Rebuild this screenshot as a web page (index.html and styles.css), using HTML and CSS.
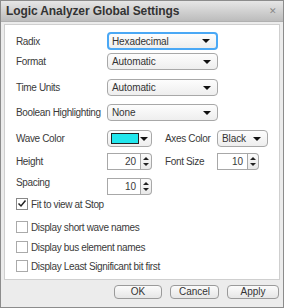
FILE: index.html
```html
<!DOCTYPE html>
<html lang="en">
<head>
    <meta charset="UTF-8">
    <title>Logic Analyzer Global Settings</title>
    <link rel="stylesheet" href="styles.css">
</head>
<body>
    <div class="dialog">
        <div class="titlebar">
            <span class="title">Logic Analyzer Global Settings</span>
            <span class="close">&#x2715;</span>
        </div>

        <div class="panel">
            <div class="row r-radix">
                <span class="label">Radix</span>
                <div class="select wide focus"><span>Hexadecimal</span><i class="arrow"></i></div>
            </div>
            <div class="row r-format">
                <span class="label">Format</span>
                <div class="select wide"><span>Automatic</span><i class="arrow"></i></div>
            </div>
            <div class="row r-units">
                <span class="label">Time Units</span>
                <div class="select wide"><span>Automatic</span><i class="arrow"></i></div>
            </div>
            <div class="row r-bool">
                <span class="label">Boolean Highlighting</span>
                <div class="select wide"><span>None</span><i class="arrow"></i></div>
            </div>
            <div class="row r-wave">
                <span class="label">Wave Color</span>
                <div class="select color"><span class="swatch"></span><i class="arrow"></i></div>
                <span class="label2">Axes Color</span>
                <div class="select axes"><span>Black</span><i class="arrow"></i></div>
            </div>
            <div class="row r-height">
                <span class="label">Height</span>
                <div class="spinner"><span class="value">20</span><span class="steps"><i class="up"></i><i class="down"></i></span></div>
                <span class="label2">Font Size</span>
                <div class="spinner small"><span class="value">10</span><span class="steps"><i class="up"></i><i class="down"></i></span></div>
            </div>
            <div class="row r-spacing">
                <span class="label">Spacing</span>
                <div class="spinner"><span class="value">10</span><span class="steps"><i class="up"></i><i class="down"></i></span></div>
            </div>

            <label class="check c-fit"><span class="box checked">
                <svg width="10" height="10" viewBox="0 0 10 10"><path d="M1.5 4.5 L4 7 L8.5 1.5" fill="none" stroke="#222" stroke-width="1.5"/></svg>
            </span>Fit to view at Stop</label>
            <label class="check c-short"><span class="box"></span>Display short wave names</label>
            <label class="check c-bus"><span class="box"></span>Display bus element names</label>
            <label class="check c-lsb"><span class="box"></span>Display Least Significant bit first</label>
        </div>

        <div class="buttons">
            <button class="btn ok">OK</button>
            <button class="btn cancel">Cancel</button>
            <button class="btn apply">Apply</button>
        </div>
    </div>
</body>
</html>
```

FILE: styles.css
```css
body {
    margin: 0;
    font-family: "Liberation Sans", Arial, sans-serif;
    font-size: 10px;
    color: #3a3a3a;
    background: #fff;
}
.dialog {
    width: 284px;
    height: 308px;
    box-sizing: border-box;
    border: 1px solid #8c8c8c;
    background: #ececec;
    display: flex;
    flex-direction: column;
}
.titlebar {
    height: 20px;
    display: flex;
    align-items: center;
    justify-content: space-between;
    padding: 0 6px 0 5px;
    background: linear-gradient(#e6e6e6, #bcbcbc);
    border-bottom: 1px solid #b0b0b0;
}
.title {
    font-weight: bold;
    font-size: 12px;
    letter-spacing: -0.1px;
    color: #333;
}
.close {
    font-size: 9px;
    color: #888;
}
.panel {
    margin: 2px 3px 0 3px;
    height: 256px;
    box-sizing: border-box;
    border: 1px solid #cfcfcf;
    background: #fff;
    padding: 0 0 0 11px;
    display: flex;
    flex-direction: column;
    letter-spacing: -0.35px;
}
.row {
    display: flex;
    align-items: center;
    height: 17px;
    white-space: nowrap;
}
.label {
    width: 91px;
    flex: none;
}
.label2 {
    width: 52px;
    margin-left: 13px;
    flex: none;
}
.r-radix { margin-top: 7px; height: 18px; }
.r-format { margin-top: 3px; }
.r-units { margin-top: 9px; }
.r-bool { margin-top: 8px; }
.r-wave { margin-top: 9px; }
.r-height { margin-top: 6px; }
.r-spacing { margin-top: 7px; }

.select {
    box-sizing: border-box;
    height: 17px;
    border: 1px solid #a8a8a8;
    border-radius: 4px;
    background: linear-gradient(#fdfdfd, #eeeeee);
    display: flex;
    align-items: center;
    justify-content: space-between;
    padding: 0 6px 0 4px;
    color: #333;
    letter-spacing: -0.1px;
}
.select.wide { width: 111px; }
.select.focus {
    height: 18px;
    border: 2px solid #4aa8f5;
    padding-left: 3px;
}
.select.color { width: 45px; padding-left: 3px; padding-right: 3px; }
.select.axes { width: 51px; }
.arrow {
    width: 0;
    height: 0;
    border-left: 4px solid transparent;
    border-right: 4px solid transparent;
    border-top: 4px solid #111;
}
.swatch {
    width: 26px;
    height: 9px;
    border: 1px solid #222;
    background: #22e6ec;
}

.spinner {
    display: flex;
    height: 17px;
    box-sizing: border-box;
}
.spinner .value {
    width: 34px;
    box-sizing: border-box;
    border: 1px solid #a8a8a8;
    background: #fff;
    text-align: right;
    padding-right: 4px;
    line-height: 15px;
    letter-spacing: 0;
}
.spinner.small .value { width: 31px; }
.steps {
    width: 11px;
    box-sizing: border-box;
    border: 1px solid #a8a8a8;
    border-left: none;
    border-radius: 0 4px 4px 0;
    background: linear-gradient(#fbfbfb, #e8e8e8);
    display: flex;
    flex-direction: column;
    align-items: center;
    justify-content: space-around;
    padding: 2px 0;
}
.steps .up {
    border-left: 3px solid transparent;
    border-right: 3px solid transparent;
    border-bottom: 3px solid #222;
}
.steps .down {
    border-left: 3px solid transparent;
    border-right: 3px solid transparent;
    border-top: 3px solid #222;
}
.r-spacing { align-items: flex-start; }
.r-spacing .spinner { margin-top: 1px; }

.check {
    display: flex;
    align-items: center;
    height: 12px;
    white-space: nowrap;
}
.box {
    width: 10px;
    height: 10px;
    border: 1px solid #aaa;
    background: #fff;
    margin-right: 3px;
    display: flex;
}
.box.checked { border-color: #888; }
.c-fit { margin-top: 4px; }
.c-short { margin-top: 11px; }
.c-bus { margin-top: 8px; }
.c-lsb { margin-top: 7px; }

.buttons {
    display: flex;
    justify-content: flex-end;
    gap: 8px;
    padding: 5px 4px 0 0;
}
.btn {
    font-family: "Liberation Sans", Arial, sans-serif;
    font-size: 10px;
    color: #333;
    height: 14px;
    padding: 0;
    border: 1px solid #9a9a9a;
    border-radius: 4px;
    background: linear-gradient(#fbfbfb, #e6e6e6);
    line-height: 12px;
}
.ok { width: 48px; }
.cancel { width: 49px; }
.apply { width: 52px; }
```
